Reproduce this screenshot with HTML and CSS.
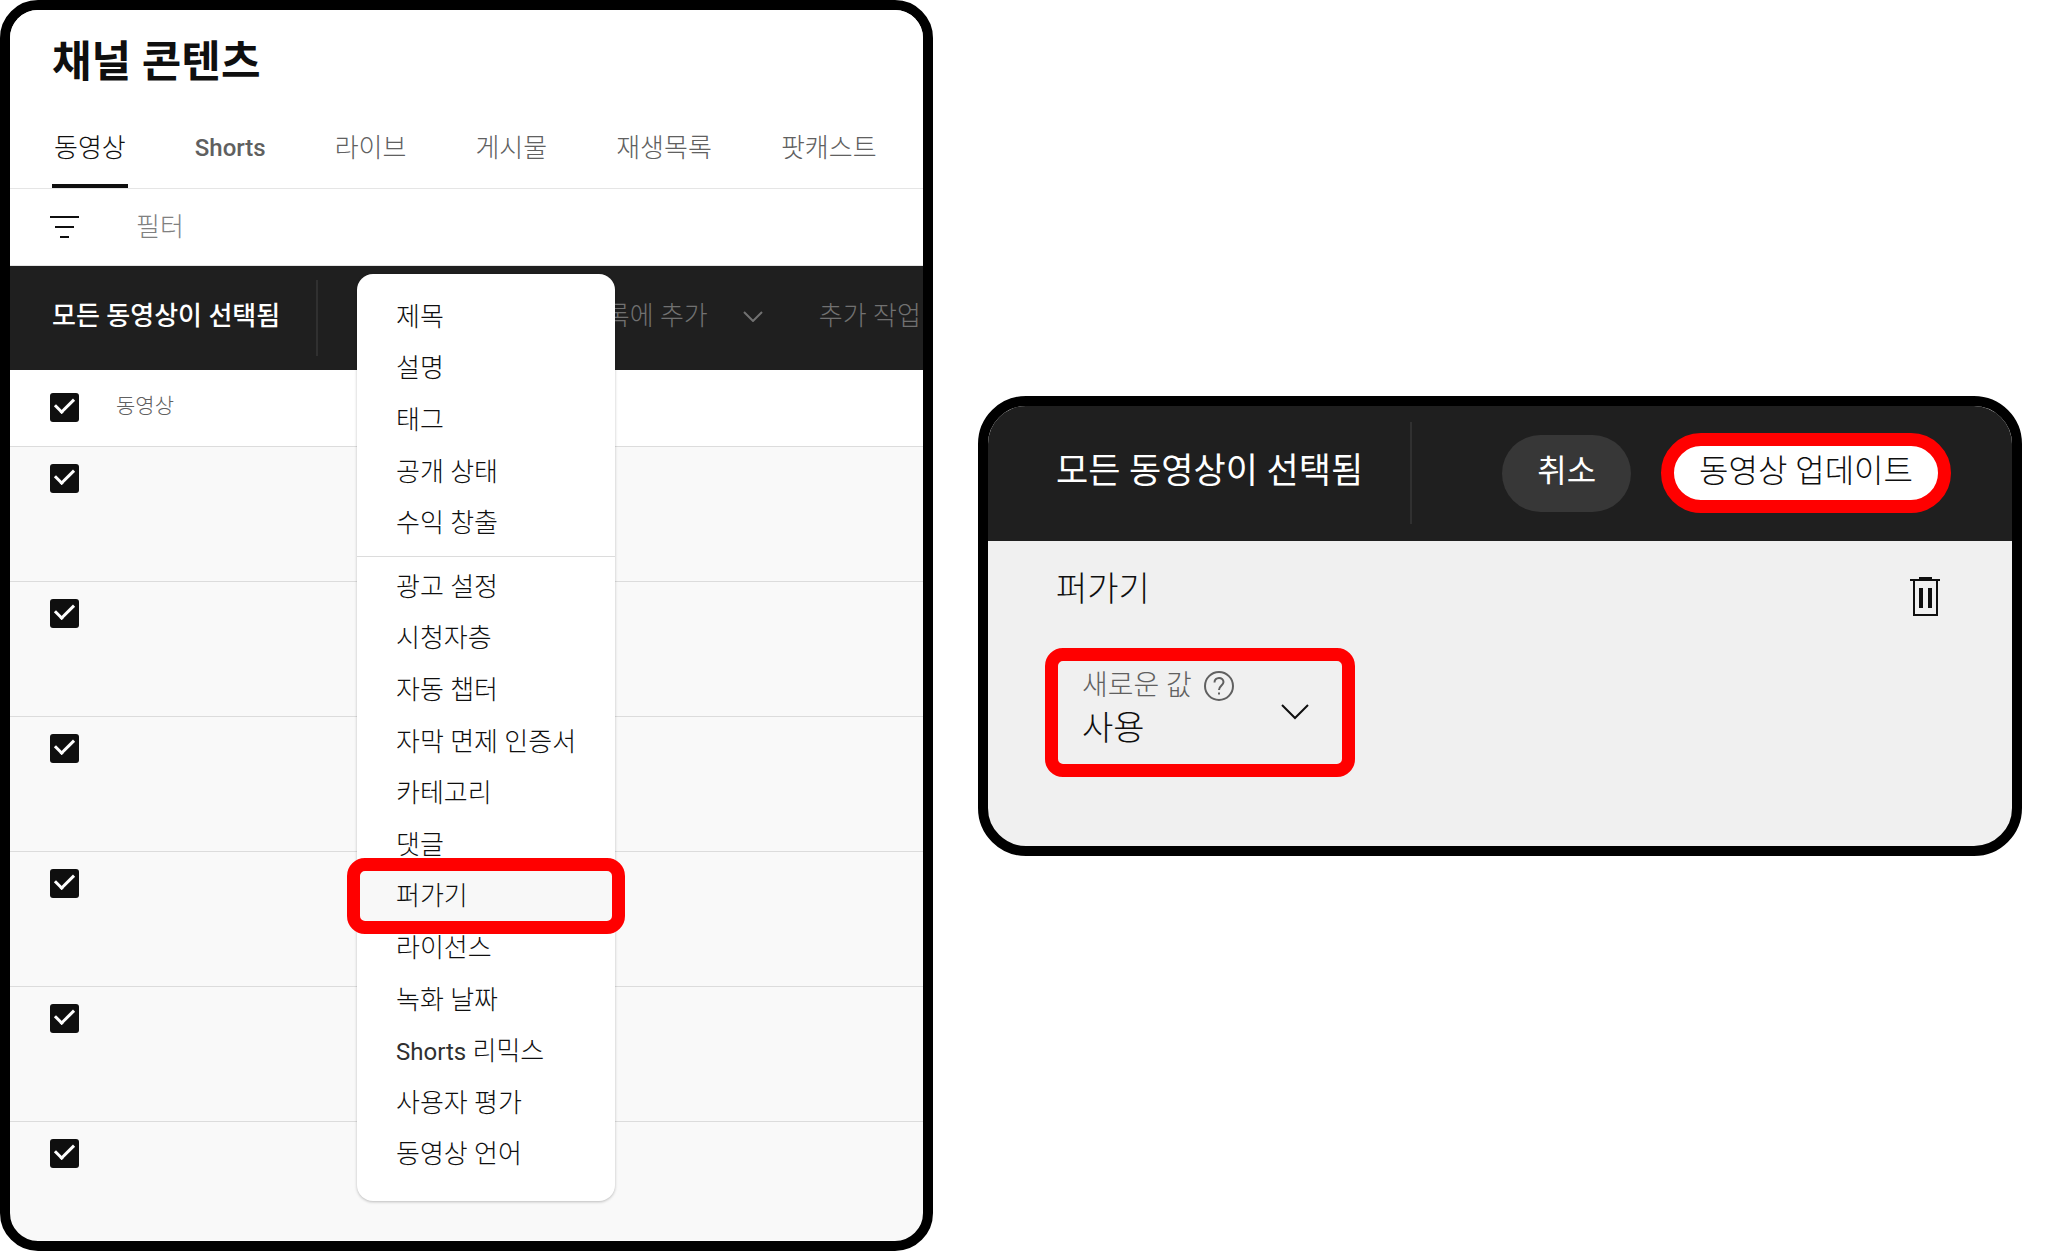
FILE: index.html
```html
<!DOCTYPE html>
<html lang="ko">
<head>
  <meta charset="UTF-8">
  <meta name="viewport" content="width=device-width, initial-scale=1">
  <title>채널 콘텐츠</title>
  <link rel="stylesheet" href="styles.css">
</head>
<body>

<main class="page">
  <section class="panel content-panel">
    <header class="panel-header">
      <h1>채널 콘텐츠</h1>
      <nav class="tabs">
        <a href="#videos" class="tab active">동영상</a>
        <a href="#shorts" class="tab latin">Shorts</a>
        <a href="#live" class="tab">라이브</a>
        <a href="#posts" class="tab">게시물</a>
        <a href="#playlists" class="tab">재생목록</a>
        <a href="#podcasts" class="tab">팟캐스트</a>
      </nav>
      <div class="filter">
        <svg class="filter-icon" viewBox="0 0 30 24" aria-hidden="true">
          <path d="M0 2h29M5 12h19M10 22h9" fill="none" stroke="#0f0f0f" stroke-width="2"/>
        </svg>
        <input type="text" class="filter-input" placeholder="필터" aria-label="필터">
      </div>
    </header>

    <div class="bulk-bar">
      <p class="bulk-title">모든 동영상이 선택됨</p>
      <div class="edit-menu">
        <ul class="menu">
          <li><button type="button">제목</button></li>
          <li><button type="button">설명</button></li>
          <li><button type="button">태그</button></li>
          <li><button type="button">공개 상태</button></li>
          <li><button type="button">수익 창출</button></li>
          <li class="divider"></li>
          <li><button type="button">광고 설정</button></li>
          <li><button type="button">시청자층</button></li>
          <li><button type="button">자동 챕터</button></li>
          <li><button type="button">자막 면제 인증서</button></li>
          <li><button type="button">카테고리</button></li>
          <li><button type="button">댓글</button></li>
          <li class="marked"><button type="button">퍼가기</button></li>
          <li><button type="button">라이선스</button></li>
          <li><button type="button">녹화 날짜</button></li>
          <li><button type="button"><span class="latin">Shorts</span> 리믹스</button></li>
          <li><button type="button">사용자 평가</button></li>
          <li><button type="button">동영상 언어</button></li>
        </ul>
      </div>
      <button type="button" class="bulk-action" disabled>재생목록에 추가
        <svg class="bulk-chevron" viewBox="0 0 20 11" aria-hidden="true">
          <path d="M1 1l9 9 9-9" fill="none" stroke="#717171" stroke-width="2"/>
        </svg>
      </button>
      <button type="button" class="bulk-action" disabled>추가 작업</button>
    </div>

    <table class="videos">
      <thead>
        <tr>
          <th class="check-cell"><input type="checkbox" checked aria-label="모두 선택"></th>
          <th>동영상</th>
        </tr>
      </thead>
      <tbody>
        <tr><td class="check-cell"><input type="checkbox" checked aria-label="동영상 1"></td><td></td></tr>
        <tr><td class="check-cell"><input type="checkbox" checked aria-label="동영상 2"></td><td></td></tr>
        <tr><td class="check-cell"><input type="checkbox" checked aria-label="동영상 3"></td><td></td></tr>
        <tr><td class="check-cell"><input type="checkbox" checked aria-label="동영상 4"></td><td></td></tr>
        <tr><td class="check-cell"><input type="checkbox" checked aria-label="동영상 5"></td><td></td></tr>
        <tr><td class="check-cell"><input type="checkbox" checked aria-label="동영상 6"></td><td></td></tr>
      </tbody>
    </table>
  </section>

  <section class="panel update-panel">
    <div class="update-bar">
      <p class="update-title">모든 동영상이 선택됨</p>
      <div class="update-actions">
        <button type="button" class="pill cancel">취소</button>
        <button type="button" class="pill update">동영상 업데이트</button>
      </div>
    </div>
    <div class="update-body">
      <div class="update-heading">
        <h2>퍼가기</h2>
        <button type="button" class="delete" aria-label="삭제">
          <svg viewBox="0 0 30 40" aria-hidden="true">
            <path d="M0 3h30M9 1h13" fill="none" stroke="#0f0f0f" stroke-width="2"/>
            <path d="M4 3v35h23V3" fill="none" stroke="#0f0f0f" stroke-width="2"/>
            <path d="M11 11v20M20 11v20" fill="none" stroke="#0f0f0f" stroke-width="4"/>
          </svg>
        </button>
      </div>
      <div class="field">
        <div class="field-text">
          <label for="embed">새로운 값
            <svg class="help" viewBox="0 0 30 30" aria-hidden="true">
              <circle cx="15" cy="15" r="14" fill="none" stroke="#606060" stroke-width="2"/>
              <path d="M10.500 11.500c0-6 9-6 9-.5 0 3.500-4.500 3.500-4.500 8" fill="none" stroke="#606060" stroke-width="2"/>
              <path d="M14 21.500h2v2h-2z" fill="#606060"/>
            </svg>
          </label>
          <select id="embed">
            <option>사용</option>
          </select>
        </div>
        <svg class="field-chevron" viewBox="0 0 28 16" aria-hidden="true">
          <path d="M1 1l13 13L27 1" fill="none" stroke="#0f0f0f" stroke-width="2"/>
        </svg>
      </div>
    </div>
  </section>
</main>

</body>
</html>
```
FILE: styles.css
```css
*,
*::before,
*::after {
  box-sizing: border-box;
}
body {
  margin: 0;
  background-color: #ffffff;
  color: #0f0f0f;
  font-family: Roboto, "Noto Sans CJK KR", sans-serif;
  font-size: 26px;
  font-weight: 300;
  line-height: 32px;
}
h1, h2, p, ul {
  margin: 0;
  padding: 0;
}
button, input, select {
  margin: 0;
  padding: 0;
  border: none;
  background: none;
  color: inherit;
  font: inherit;
}
svg {
  display: block;
  flex: none;
}
.latin {
  font-size: 24px;
  font-weight: 400;
}

.page {
  display: grid;
  grid-template-columns: 933fr 1044fr;
  gap: 45px;
  align-items: center;
  min-height: 100vh;
  padding-right: 26px;
}
.panel {
  border: 10px solid #000000;
  overflow: hidden;
}

/* channel content */
.content-panel {
  align-self: stretch;
  border-radius: 38px;
  background-color: #f9f9f9;
}
.panel-header {
  background-color: #ffffff;
}
h1 {
  padding: 24px 42px 0;
  font-size: 43px;
  line-height: 56px;
}
.tabs {
  display: flex;
  gap: 65px;
  padding: 32px 42px 0;
  border-bottom: 1px solid #e5e5e5;
}
.tab {
  padding: 10px 2px 20px;
  border-bottom: 4px solid transparent;
  color: #606060;
  text-decoration: none;
  white-space: nowrap;
}
.tab.latin {
  font-weight: 500;
}
.tab.active {
  border-bottom-color: #0f0f0f;
  color: #0f0f0f;
}
.filter {
  display: flex;
  align-items: center;
  gap: 56px;
  height: 77px;
  padding: 0 40px;
  border-bottom: 1px solid #e5e5e5;
}
.filter-icon {
  width: 30px;
  height: 24px;
}
.filter-input {
  flex: 1;
  min-width: 0;
}
.filter-input::placeholder {
  color: #808080;
  opacity: 1;
}

.bulk-bar {
  display: flex;
  align-items: center;
  height: 104px;
  padding-left: 42px;
  background-color: #1f1f1f;
  color: #ffffff;
  white-space: nowrap;
}
.bulk-title {
  flex: none;
  width: 266px;
  padding: 20px 0 24px;
  border-right: 2px solid #303030;
  font-weight: 500;
}
.bulk-action {
  display: flex;
  flex: none;
  align-items: center;
  gap: 35px;
  margin-right: 56px;
  padding-bottom: 4px;
  color: #717171;
}
.bulk-chevron {
  width: 20px;
  height: 11px;
}
.edit-menu {
  position: relative;
  align-self: stretch;
  flex: none;
  width: 216px;
}
.menu {
  position: absolute;
  z-index: 1;
  top: 8px;
  left: 39px;
  display: flex;
  flex-direction: column;
  width: 258px;
  height: 927px;
  padding: 17px 0 21px;
  border-radius: 16px;
  background-color: #ffffff;
  box-shadow: 0 1px 3px rgba(0, 0, 0, 0.25);
  color: #0f0f0f;
  list-style: none;
}
.menu li {
  flex: 1;
}
.menu .divider {
  flex: none;
  height: 1px;
  margin: 7px 0 4px;
  background-color: #dcdcdc;
}
.menu button {
  width: 100%;
  height: 100%;
  padding-left: 39px;
  text-align: left;
}
.menu .latin {
  color: #303030;
}
.menu .marked {
  position: relative;
  background-color: #f8f8f8;
}
.menu .marked::after {
  content: "";
  position: absolute;
  inset: -13px -10px -12px;
  border: 13px solid #ff0000;
  border-radius: 18px;
}

.videos {
  width: 100%;
  border-collapse: collapse;
}
.videos thead {
  background-color: #ffffff;
}
.videos th {
  height: 76px;
  padding: 0 0 4px;
  color: #606060;
  font-size: 21px;
  font-weight: 300;
  text-align: left;
}
.videos td {
  height: 135px;
  padding: 17px 0 0;
  border-top: 1px solid #dcdcdc;
  vertical-align: top;
}
.videos tr:last-child td {
  height: 100px;
}
.videos .check-cell {
  width: 106px;
  padding-left: 40px;
}
.videos th.check-cell {
  padding-bottom: 0;
}
input[type="checkbox"] {
  display: block;
  width: 29px;
  height: 29px;
  padding-top: 1px;
  border-radius: 3px;
  appearance: none;
}
input[type="checkbox"]:checked {
  background-color: #0f0f0f;
}
input[type="checkbox"]:checked::before {
  content: "";
  display: block;
  width: 11px;
  height: 19px;
  margin: 0 auto;
  border: solid #ffffff;
  border-width: 0 3px 3px 0;
  transform: rotate(45deg);
}

/* bulk update */
.update-panel {
  border-radius: 48px;
  background-color: #f0f0f0;
}
.update-bar {
  display: flex;
  align-items: center;
  justify-content: space-between;
  height: 135px;
  padding: 0 61px 0 68px;
  background-color: #1f1f1f;
  color: #ffffff;
}
.update-title {
  width: 356px;
  padding: 34px 0 36px;
  border-right: 2px solid #303030;
  font-size: 35px;
  font-weight: 400;
  white-space: nowrap;
}
.update-actions {
  display: flex;
  align-items: center;
  gap: 30px;
}
.pill {
  height: 80px;
  border-radius: 40px;
  font-size: 32px;
  white-space: nowrap;
}
.cancel {
  height: 77px;
  padding: 0 35px 4px;
  background-color: #373737;
  font-weight: 400;
}
.update {
  padding: 0 25px 4px;
  border: 13px solid #ff0000;
  background-color: #ffffff;
  color: #0f0f0f;
}
.update-body {
  padding: 28px 57px 69px;
}
.update-heading {
  display: flex;
  align-items: center;
  justify-content: space-between;
  padding: 0 15px 0 11px;
}
h2 {
  padding-bottom: 12px;
  font-size: 34px;
  font-weight: 300;
  line-height: 40px;
}
.delete {
  margin-top: 5px;
}
.delete svg {
  width: 30px;
  height: 40px;
}
.field {
  display: flex;
  align-items: center;
  justify-content: space-between;
  width: 310px;
  height: 129px;
  margin-top: 27px;
  padding: 0 33px 0 24px;
  border: 13px solid #ff0000;
  border-radius: 18px;
}
.field label {
  display: flex;
  align-items: center;
  gap: 12px;
  color: #606060;
  font-size: 28px;
}
.help {
  width: 30px;
  height: 30px;
}
.field select {
  display: block;
  width: 100%;
  height: 52px;
  font-size: 34px;
  appearance: none;
}
.field-chevron {
  width: 28px;
  height: 16px;
}
```
